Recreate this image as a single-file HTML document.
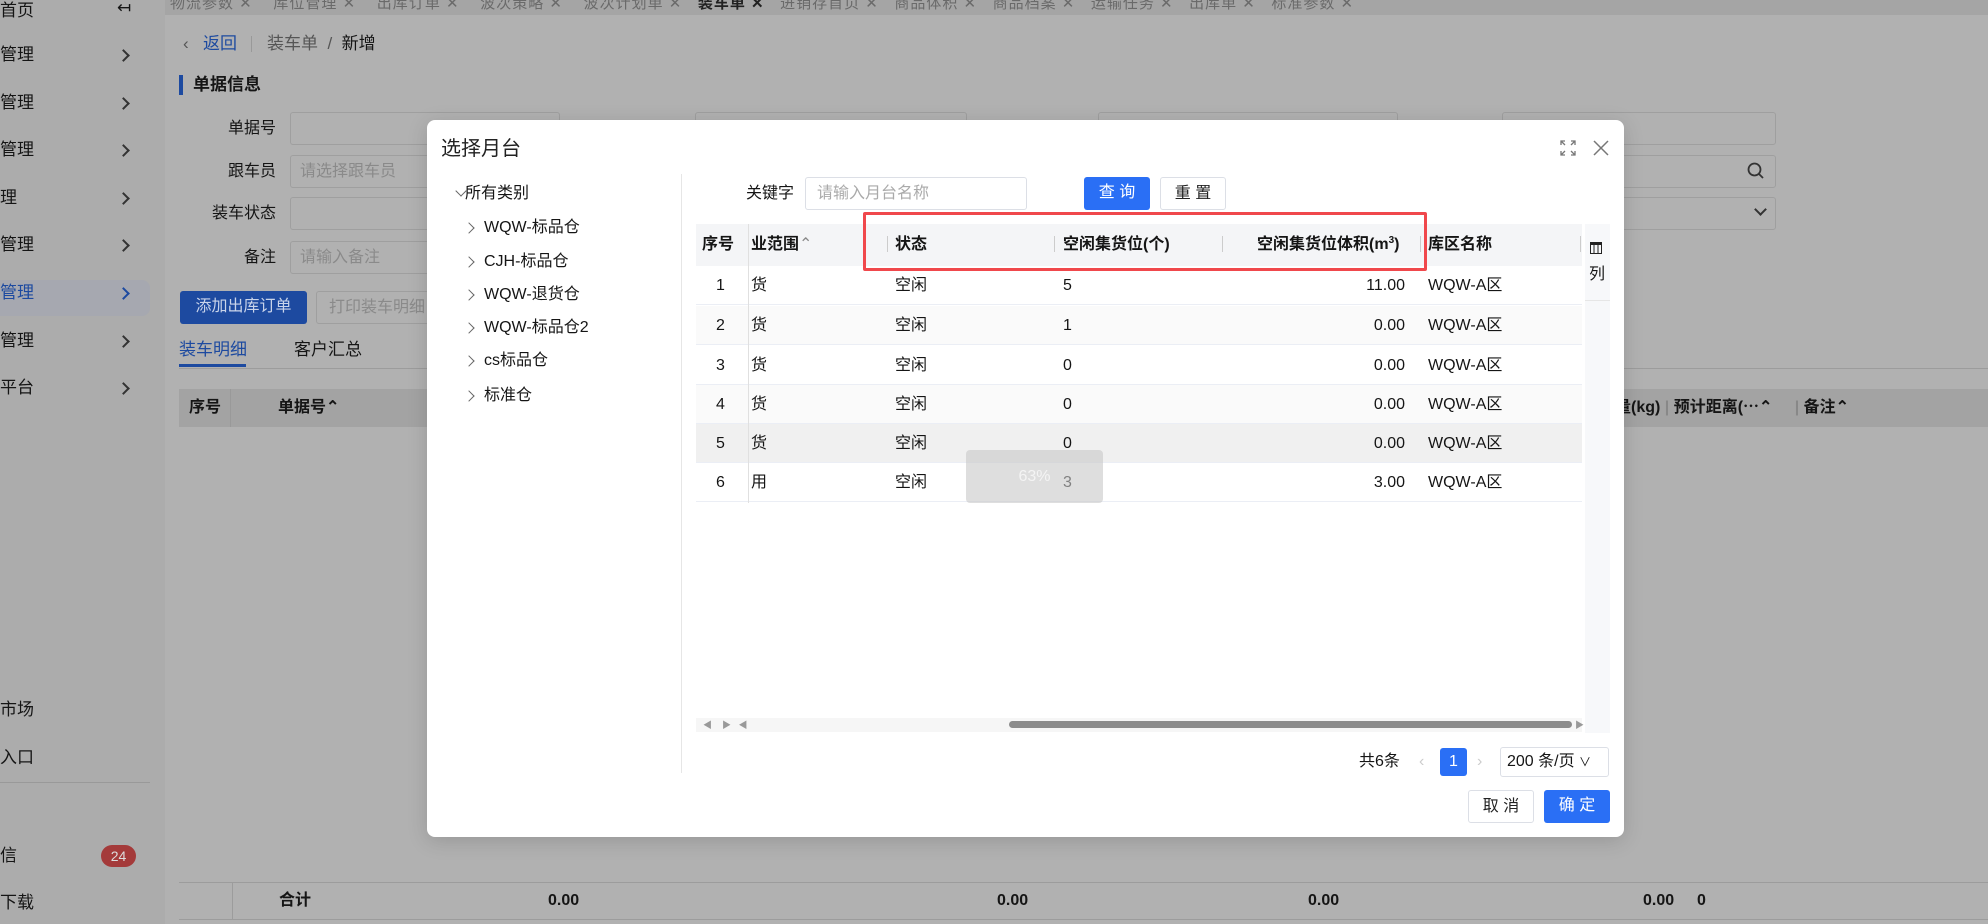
<!DOCTYPE html>
<html><head><meta charset="utf-8"><style>
*{margin:0;padding:0;box-sizing:border-box}
body{width:1988px;height:924px;overflow:hidden;background:#b1b1b1;font-family:"Liberation Sans","Noto Sans CJK SC",sans-serif;font-size:16px;color:#151515;position:relative}
.a{position:absolute;white-space:nowrap}
.side{position:absolute;left:0;top:0;width:165px;height:924px;background:#acacac}
.chev{position:absolute;width:9px;height:9px;border-right:2px solid #333;border-top:2px solid #333;transform:rotate(45deg)}
.inp{position:absolute;height:33px;border:1px solid #9f9f9f;border-radius:3px;background:#b1b1b1;color:#8a8a8a;padding-left:9px;line-height:31px;font-size:16px}
.modal{position:absolute;left:427px;top:120px;width:1197px;height:717px;background:#fff;border-radius:8px;box-shadow:0 4px 20px rgba(0,0,0,.15)}
.m{position:absolute;white-space:nowrap}
.tc{width:8px;height:8px;border-right:1.5px solid #666;border-top:1.5px solid #666;transform:rotate(45deg);position:absolute}
.row{position:absolute;left:269px;width:886px;height:39px;border-bottom:1px solid #ebeef5;line-height:39px}
.row span{position:absolute}
.btn{position:absolute;height:33px;border-radius:3px;text-align:center;line-height:31px;font-size:16px}
sup{line-height:0;font-size:10px;vertical-align:6px}
</style></head><body>
<div class="a" style="left:165px;top:0;width:1823px;height:15px;background:#a5a5a5"></div>
<div class="a" style="left:170px;top:-8px;font-size:15px;color:#6a6a6a;letter-spacing:1px">物流参数 ✕ &nbsp;&nbsp; 库位管理 ✕ &nbsp;&nbsp; 出库订单 ✕ &nbsp;&nbsp; 波次策略 ✕ &nbsp;&nbsp; 波次计划单 ✕ &nbsp; <b style="color:#222">装车单 ✕</b> &nbsp; 进销存首页 ✕ &nbsp; 商品体积 ✕ &nbsp; 商品档案 ✕ &nbsp; 运输任务 ✕ &nbsp; 出库单 ✕ &nbsp; 标准参数 ✕</div>
<div class="side"></div>
<div class="a" style="left:0;top:-4px;font-size:17px">首页</div>
<div class="a" style="left:117px;top:-2px;font-size:17px">↤</div>
<div class="a" style="left:0;top:280px;width:150px;height:36px;background:#a6a8b0;border-radius:0 8px 8px 0"></div>
<div class="a" style="left:0;top:43px;font-size:17px;line-height:24px">管理</div><div class="chev" style="left:119px;top:51px"></div>
<div class="a" style="left:0;top:91px;font-size:17px;line-height:24px">管理</div><div class="chev" style="left:119px;top:99px"></div>
<div class="a" style="left:0;top:138px;font-size:17px;line-height:24px">管理</div><div class="chev" style="left:119px;top:146px"></div>
<div class="a" style="left:0;top:186px;font-size:17px;line-height:24px">理</div><div class="chev" style="left:119px;top:194px"></div>
<div class="a" style="left:0;top:233px;font-size:17px;line-height:24px">管理</div><div class="chev" style="left:119px;top:241px"></div>
<div class="a" style="left:0;top:281px;font-size:17px;line-height:24px;color:#1d4aa0">管理</div><div class="chev" style="left:119px;top:289px;border-color:#1d4aa0"></div>
<div class="a" style="left:0;top:329px;font-size:17px;line-height:24px">管理</div><div class="chev" style="left:119px;top:337px"></div>
<div class="a" style="left:0;top:376px;font-size:17px;line-height:24px">平台</div><div class="chev" style="left:119px;top:384px"></div>
<div class="a" style="left:0;top:698px;font-size:17px;line-height:24px">市场</div>
<div class="a" style="left:0;top:746px;font-size:17px;line-height:24px">入口</div>
<div class="a" style="left:0;top:782px;width:150px;height:1px;background:#999"></div>
<div class="a" style="left:0;top:844px;font-size:17px;line-height:24px">信</div>
<div class="a" style="left:101px;top:845px;width:35px;height:22px;border-radius:11px;background:#a43a3a;color:#ddd;font-size:14px;text-align:center;line-height:22px">24</div>
<div class="a" style="left:0;top:891px;font-size:17px;line-height:24px">下载</div>
<div class="a" style="left:183px;top:32px;font-size:17px;line-height:24px;color:#555">‹</div>
<div class="a" style="left:203px;top:32px;font-size:17px;line-height:24px;color:#1d4aa0">返回</div>
<div class="a" style="left:251px;top:36px;width:1px;height:16px;background:#999"></div>
<div class="a" style="left:267px;top:32px;font-size:17px;line-height:24px;color:#555">装车单 &nbsp;/ &nbsp;<span style="color:#151515">新增</span></div>
<div class="a" style="left:179px;top:75px;width:4px;height:20px;background:#1d4aa0"></div>
<div class="a" style="left:193px;top:73px;font-size:17px;font-weight:bold;line-height:24px">单据信息</div>
<div class="a" style="left:228px;top:117px;font-size:16px;line-height:24px">单据号</div>
<div class="a" style="left:228px;top:160px;font-size:16px;line-height:24px">跟车员</div>
<div class="a" style="left:212px;top:202px;font-size:16px;line-height:24px">装车状态</div>
<div class="a" style="left:244px;top:246px;font-size:16px;line-height:24px">备注</div>
<div class="inp" style="left:290px;top:112px;width:270px"></div>
<div class="inp" style="left:290px;top:155px;width:270px">请选择跟车员</div>
<div class="inp" style="left:290px;top:197px;width:270px"></div>
<div class="inp" style="left:290px;top:241px;width:270px">请输入备注</div>
<div class="inp" style="left:695px;top:112px;width:272px"></div>
<div class="inp" style="left:1098px;top:112px;width:300px"></div>
<div class="inp" style="left:1502px;top:112px;width:274px"></div>
<div class="inp" style="left:1502px;top:155px;width:274px"></div>
<svg class="a" style="left:1746px;top:161px" width="20" height="20" viewBox="0 0 20 20" fill="none" stroke="#333" stroke-width="1.8"><circle cx="8.5" cy="8.5" r="6"/><path d="M13 13l4 4"/></svg>
<div class="inp" style="left:1502px;top:197px;width:274px"></div>
<div class="chev" style="left:1756px;top:205px;transform:rotate(135deg);border-color:#333"></div>
<div class="btn" style="left:180px;top:291px;width:127px;background:#1d4aa0;color:#c9d4ea">添加出库订单</div>
<div class="btn" style="left:316px;top:291px;width:120px;border:1px solid #9f9f9f;color:#8a8a8a;text-align:left;padding-left:12px">打印装车明细</div>
<div class="a" style="left:179px;top:338px;font-size:17px;line-height:24px;color:#1d4aa0">装车明细</div>
<div class="a" style="left:179px;top:364px;width:67px;height:3px;background:#1d4aa0"></div>
<div class="a" style="left:294px;top:338px;font-size:17px;line-height:24px">客户汇总</div>
<div class="a" style="left:179px;top:368px;width:1809px;height:1px;background:#9c9c9c"></div>
<div class="a" style="left:179px;top:389px;width:1809px;height:38px;background:#a3a3a3"></div>
<div class="a" style="left:230px;top:389px;width:1px;height:38px;background:#999"></div>
<div class="a" style="left:189px;top:396px;font-weight:bold;line-height:24px">序号</div>
<div class="a" style="left:278px;top:396px;font-weight:bold;line-height:24px">单据号⌃</div>
<div class="a" style="left:1615px;top:396px;font-weight:bold;line-height:24px">量(kg) <span style="color:#888">|</span> 预计距离(⋯⌃ &nbsp;&nbsp;&nbsp; <span style="color:#888">|</span> 备注⌃</div>
<div class="a" style="left:179px;top:882px;width:1809px;height:1px;background:#9c9c9c"></div>
<div class="a" style="left:179px;top:919px;width:1809px;height:1px;background:#9c9c9c"></div>
<div class="a" style="left:232px;top:882px;width:1px;height:38px;background:#9c9c9c"></div>
<div class="a" style="left:279px;top:889px;font-weight:bold;line-height:24px">合计</div>
<div class="a" style="left:548px;top:889px;font-weight:bold;line-height:24px">0.00</div>
<div class="a" style="left:997px;top:889px;font-weight:bold;line-height:24px">0.00</div>
<div class="a" style="left:1308px;top:889px;font-weight:bold;line-height:24px">0.00</div>
<div class="a" style="left:1643px;top:889px;font-weight:bold;line-height:24px">0.00</div>
<div class="a" style="left:1697px;top:889px;font-weight:bold;line-height:24px">0</div>

<div class="modal">
 <div class="m" style="left:14px;top:15px;font-size:20px;line-height:28px;color:#222">选择月台</div>
 <svg class="m" style="left:1133px;top:20px" width="16" height="16" viewBox="0 0 16 16" fill="none" stroke="#777" stroke-width="1.3"><path d="M1 5V1h4M11 1h4v4M15 11v4h-4M5 15H1v-4M1 1l4 4M15 1l-4 4M15 15l-4-4M1 15l4-4"/></svg>
 <svg class="m" style="left:1165px;top:19px" width="18" height="18" viewBox="0 0 18 18" stroke="#777" stroke-width="1.5"><path d="M2 2l14 14M16 2L2 16"/></svg>
 <div class="m" style="left:254px;top:54px;width:1px;height:599px;background:#e6e6e6"></div>
 <div class="tc" style="left:30px;top:67px;transform:rotate(135deg)"></div>
 <div class="m" style="left:38px;top:62px;line-height:24px;font-size:16px">所有类别</div>
 <div class="tc" style="left:38px;top:104px"></div><div class="m" style="left:57px;top:96px;line-height:24px">WQW-标品仓</div>
 <div class="tc" style="left:38px;top:138px"></div><div class="m" style="left:57px;top:130px;line-height:24px">CJH-标品仓</div>
 <div class="tc" style="left:38px;top:171px"></div><div class="m" style="left:57px;top:163px;line-height:24px">WQW-退货仓</div>
 <div class="tc" style="left:38px;top:204px"></div><div class="m" style="left:57px;top:196px;line-height:24px">WQW-标品仓2</div>
 <div class="tc" style="left:38px;top:237px"></div><div class="m" style="left:57px;top:229px;line-height:24px">cs标品仓</div>
 <div class="tc" style="left:38px;top:272px"></div><div class="m" style="left:57px;top:264px;line-height:24px">标准仓</div>

 <div class="m" style="left:319px;top:62px;line-height:24px">关键字</div>
 <div class="m" style="left:378px;top:57px;width:222px;height:33px;border:1px solid #dcdfe6;border-radius:3px;color:#aaa;line-height:31px;padding-left:11px">请输入月台名称</div>
 <div class="btn" style="left:657px;top:57px;width:66px;background:#2a6ff5;color:#fff">查 询</div>
 <div class="btn" style="left:733px;top:57px;width:66px;border:1px solid #dcdfe6;color:#222">重 置</div>

 <div class="m" style="left:269px;top:104px;width:886px;height:42px;background:#f4f5f7"></div>
 <div class="m" style="left:1158px;top:104px;width:25px;height:509px;background:#f7f8fa"></div>
 <div class="m" style="left:1158px;top:180px;width:25px;height:1px;background:#e6e6e6"></div>
 <svg class="m" style="left:1163px;top:122px" width="12" height="12" viewBox="0 0 12 12"><rect x="0.5" y="0.5" width="11" height="11" fill="none" stroke="#222"/><rect x="0" y="0" width="12" height="3" fill="#222"/><path d="M4 3v9M8 3v9" stroke="#222"/></svg>
 <div class="m" style="left:1162px;top:140px;font-size:16px">列</div>
 <div class="m" style="left:275px;top:113px;font-weight:bold;line-height:24px">序号</div>
 <div class="m" style="left:324px;top:113px;font-weight:bold;line-height:24px">业范围<span style="color:#888;font-weight:normal">⌃</span></div>
 <div class="m" style="left:460px;top:116px;width:1px;height:16px;background:#ccc"></div>
 <div class="m" style="left:468px;top:113px;font-weight:bold;line-height:24px">状态</div>
 <div class="m" style="left:627px;top:116px;width:1px;height:16px;background:#ccc"></div>
 <div class="m" style="left:636px;top:113px;font-weight:bold;line-height:24px">空闲集货位(个)</div>
 <div class="m" style="left:795px;top:116px;width:1px;height:16px;background:#ccc"></div>
 <div class="m" style="left:830px;top:113px;font-weight:bold;line-height:24px">空闲集货位体积(m<sup>3</sup>)</div>
 <div class="m" style="left:993px;top:116px;width:1px;height:16px;background:#ccc"></div>
 <div class="m" style="left:1001px;top:113px;font-weight:bold;line-height:24px">库区名称</div>
 <div class="m" style="left:1153px;top:116px;width:1px;height:16px;background:#ccc"></div>

 <div class="row" style="top:146px"><span style="left:20px">1</span><span style="left:55px">货</span><span style="left:199px">空闲</span><span style="left:367px">5</span><span style="right:177px">11.00</span><span style="left:732px">WQW-A区</span></div>
 <div class="row" style="top:186px;background:#fafafa"><span style="left:20px">2</span><span style="left:55px">货</span><span style="left:199px">空闲</span><span style="left:367px">1</span><span style="right:177px">0.00</span><span style="left:732px">WQW-A区</span></div>
 <div class="row" style="top:226px"><span style="left:20px">3</span><span style="left:55px">货</span><span style="left:199px">空闲</span><span style="left:367px">0</span><span style="right:177px">0.00</span><span style="left:732px">WQW-A区</span></div>
 <div class="row" style="top:265px;background:#fafafa"><span style="left:20px">4</span><span style="left:55px">货</span><span style="left:199px">空闲</span><span style="left:367px">0</span><span style="right:177px">0.00</span><span style="left:732px">WQW-A区</span></div>
 <div class="row" style="top:304px;background:#f0f0f0"><span style="left:20px">5</span><span style="left:55px">货</span><span style="left:199px">空闲</span><span style="left:367px">0</span><span style="right:177px">0.00</span><span style="left:732px">WQW-A区</span></div>
 <div class="row" style="top:343px"><span style="left:20px">6</span><span style="left:55px">用</span><span style="left:199px">空闲</span><span style="left:367px">3</span><span style="right:177px">3.00</span><span style="left:732px">WQW-A区</span></div>
 <div class="m" style="left:321px;top:104px;width:1px;height:279px;background:#e0e0e0"></div>
 <div class="m" style="left:539px;top:330px;width:137px;height:53px;background:rgba(200,200,200,.6);border-radius:4px;color:#f4f4f4;text-align:center;line-height:53px;font-size:16px">63%</div>

 <div class="m" style="left:269px;top:598px;width:886px;height:14px;background:#f6f6f6"></div>
 <div class="m" style="left:276px;top:598px;font-size:9px;color:#999">◀ &nbsp;&nbsp; ▶ &nbsp; ◀</div>
 <div class="m" style="left:582px;top:601px;width:563px;height:7px;border-radius:4px;background:#8c8c8c"></div>
 <div class="m" style="left:1148px;top:598px;font-size:9px;color:#999">▶</div>
 <div class="m" style="border:3px solid #f0484c;left:436px;top:92px;width:564px;height:59px;border-radius:2px"></div>

 <div class="m" style="left:932px;top:630px;line-height:24px">共6条</div>
 <div class="m" style="left:992px;top:630px;line-height:24px;color:#ccc">‹</div>
 <div class="m" style="left:1013px;top:628px;width:27px;height:28px;background:#2a6ff5;color:#fff;border-radius:3px;text-align:center;line-height:28px">1</div>
 <div class="m" style="left:1050px;top:630px;line-height:24px;color:#ccc">›</div>
 <div class="m" style="left:1073px;top:627px;width:109px;height:30px;border:1px solid #dcdfe6;border-radius:3px;line-height:28px;padding-left:6px">200 条/页 <span style="font-size:12px">∨</span></div>
 <div class="btn" style="left:1041px;top:670px;width:66px;border:1px solid #dcdfe6;color:#222">取 消</div>
 <div class="btn" style="left:1117px;top:670px;width:66px;background:#2a6ff5;color:#fff">确 定</div>
</div>
</body></html>
